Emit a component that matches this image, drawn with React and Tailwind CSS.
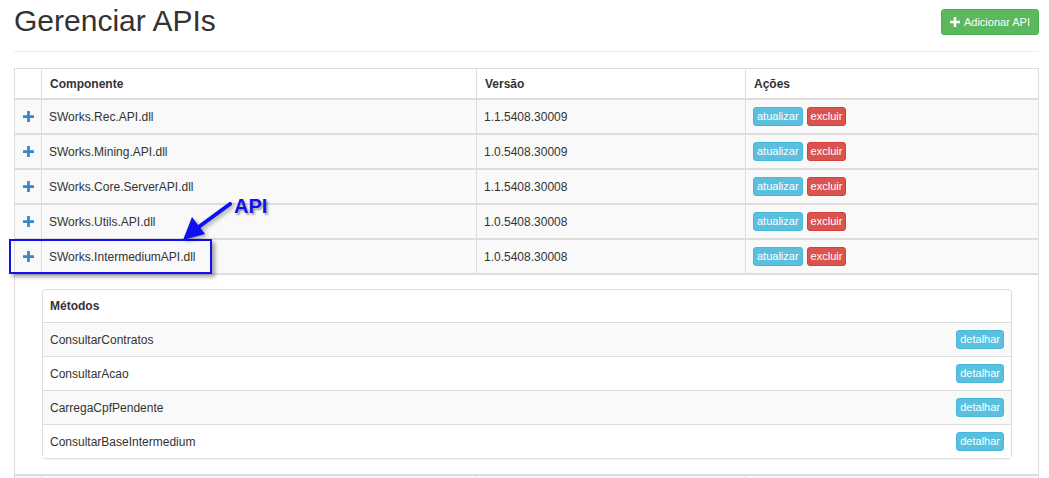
import React from 'react';

const apis = [
  { name: 'SWorks.Rec.API.dll', version: '1.1.5408.30009' },
  { name: 'SWorks.Mining.API.dll', version: '1.0.5408.30009' },
  { name: 'SWorks.Core.ServerAPI.dll', version: '1.1.5408.30008' },
  { name: 'SWorks.Utils.API.dll', version: '1.0.5408.30008' },
  { name: 'SWorks.IntermediumAPI.dll', version: '1.0.5408.30008' },
];

const metodos = ['ConsultarContratos', 'ConsultarAcao', 'CarregaCpfPendente', 'ConsultarBaseIntermedium'];

function PlusGlyph({ className }) {
  return (
    <svg viewBox="0 0 12 12" className={className} fill="currentColor">
      <path d="M4.5 0h3v4.5H12v3H7.5V12h-3V7.5H0v-3h4.5z" />
    </svg>
  );
}

function Btn({ color, children }) {
  const styles = {
    info: 'bg-[#5bc0de] border-[#46b8da]',
    danger: 'bg-[#d9534f] border-[#d43f3a]',
  };
  return (
    <button className={`${styles[color]} border text-white text-[11px] leading-[17px] px-[3px] rounded-[3px]`}>
      {children}
    </button>
  );
}

export default function App() {
  return (
    <div className="relative min-h-screen bg-white text-[#333] text-[12px]" style={{ fontFamily: '"Liberation Sans", Arial, sans-serif' }}>
      <div className="ml-[14px] w-[1025px]">
        <div className="flex items-start justify-between pt-[9px] pb-[16px] border-b border-[#eee]">
          <h1 className="text-[30px] leading-[26px] -mt-[1px] font-normal">Gerenciar APIs</h1>
          <button className="flex items-center gap-[4px] h-[26px] px-[8px] bg-[#5cb85c] border border-[#4cae4c] rounded-[3px] text-white text-[11px]">
            <PlusGlyph className="w-[10px] h-[10px]" />
            Adicionar API
          </button>
        </div>

        <div className="mt-[16px] border border-[#ddd] border-b-0">
          {/* header */}
          <div className="grid grid-cols-[26px_435px_269px_293px] h-[31px] border-b-2 border-[#ddd] font-bold">
            <div />
            <div className="border-l border-[#ddd] px-[8px] flex items-center">Componente</div>
            <div className="border-l border-[#ddd] px-[8px] flex items-center">Versão</div>
            <div className="border-l border-[#ddd] px-[8px] flex items-center">Ações</div>
          </div>

          {apis.map((a) => (
            <div key={a.name} className="grid grid-cols-[26px_435px_269px_293px] h-[35px] border-b-2 border-[#ddd] bg-[#f9f9f9]">
              <div className="flex items-center justify-center pl-[1px]">
                <PlusGlyph className="w-[11px] h-[11px] text-[#3b86c6]" />
              </div>
              <div className="border-l border-[#ddd] px-[7px] flex items-center">{a.name}</div>
              <div className="border-l border-[#ddd] px-[7px] flex items-center">{a.version}</div>
              <div className="border-l border-[#ddd] px-[7px] flex items-center gap-[4px]">
                <Btn color="info">atualizar</Btn>
                <Btn color="danger">excluir</Btn>
              </div>
            </div>
          ))}

          {/* detail row */}
          <div className="pt-[14px] pb-[15px] pl-[27px] pr-[26px] border-b-2 border-[#ddd]">
            <div className="border border-[#ddd] rounded-[4px] shadow-[0_1px_1px_rgba(0,0,0,0.05)]">
              <div className="h-[32px] px-[7px] flex items-center font-bold">Métodos</div>
              {metodos.map((m, i) => (
                <div
                  key={m}
                  className={`h-[34px] border-t border-[#ddd] px-[7px] flex items-center justify-between ${i % 2 === 0 ? 'bg-[#f9f9f9]' : 'bg-white'}`}
                >
                  <span>{m}</span>
                  <Btn color="info">detalhar</Btn>
                </div>
              ))}
            </div>
          </div>

          <div className="grid grid-cols-[26px_435px_269px_293px] h-[35px] bg-[#f9f9f9]">
            <div />
            <div className="border-l border-[#ddd]" />
            <div className="border-l border-[#ddd]" />
            <div className="border-l border-[#ddd]" />
          </div>
        </div>
      </div>

      {/* annotation overlay */}
      <div className="absolute left-[9px] top-[239px] w-[203px] h-[35px] border-2 border-[#1010f0] shadow-[3px_3px_4px_rgba(0,0,0,0.35)]" />
      <svg className="absolute left-[178px] top-[196px] w-[60px] h-[50px]" viewBox="0 0 60 50" style={{ filter: 'drop-shadow(2px 2px 2px rgba(0,0,0,0.35))' }}>
        <line x1="52" y1="8" x2="22" y2="30" stroke="#1010f0" strokeWidth="4" strokeLinecap="round" />
        <polygon points="5,44 14,21 27,38" fill="#1010f0" />
      </svg>
      <div
        className="absolute left-[234px] top-[196px] text-[20px] font-bold text-[#1010f0] leading-none"
        style={{ textShadow: '2px 2px 2px rgba(0,0,0,0.35)' }}
      >
        API
      </div>
    </div>
  );
}
